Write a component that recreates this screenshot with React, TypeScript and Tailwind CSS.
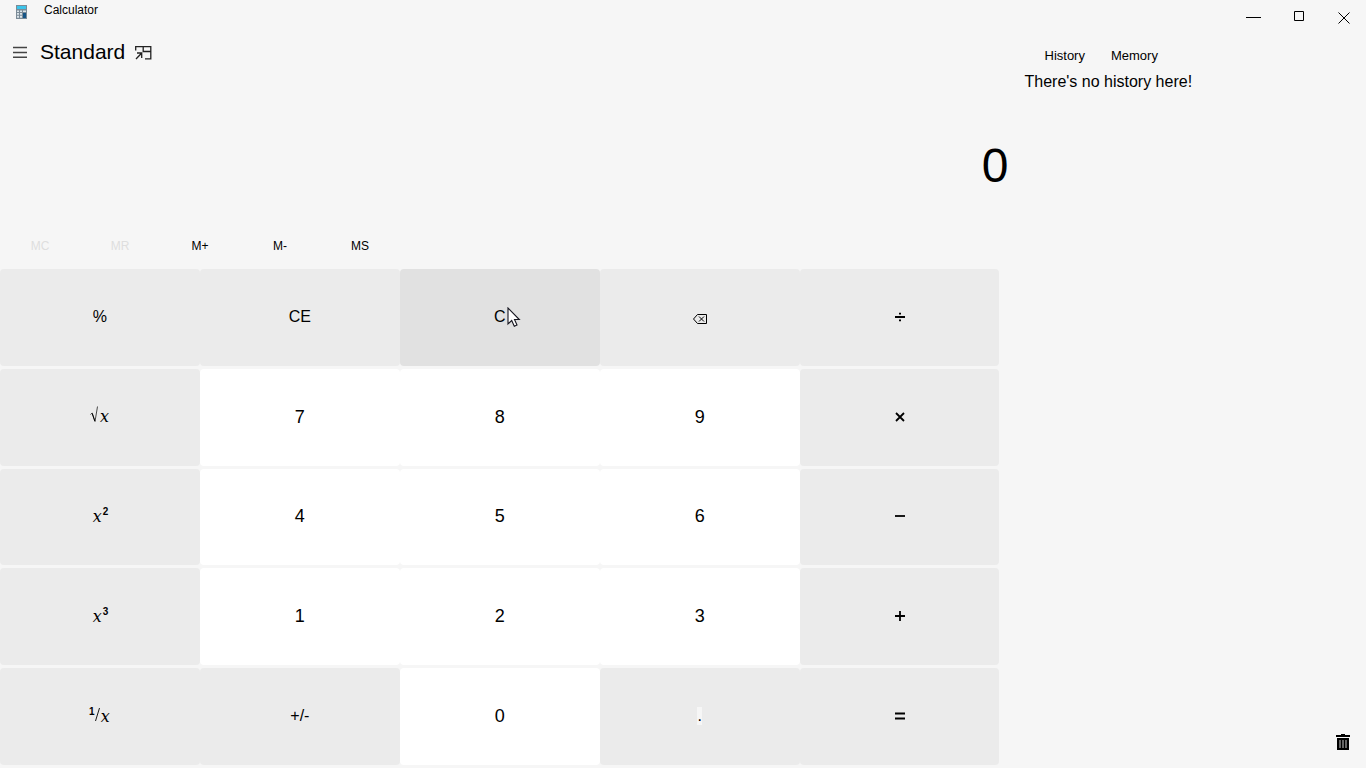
import type { ReactNode } from "react";

type Key = { label: string; face: ReactNode; tone: string };

const OPERATOR = "bg-[#ebebeb] hover:bg-[#e1e1e1]";
const ACTIVE = "bg-[#e1e1e1]";
const DIGIT = "bg-white text-lg hover:bg-[#e1e1e1]";

const Backspace = () => (
  <svg width="16" height="12" viewBox="0 0 16 12" fill="none" stroke="currentColor" className="mt-1">
    <path d="M5.5 1.5H14.5V10.5H5.5L1.5 6Z" />
    <path d="M7 3.5L12 8.5M12 3.5L7 8.5" />
  </svg>
);

const Operator = ({ d }: { d: string }) => (
  <svg width="12" height="12" viewBox="0 0 12 12" fill="none" stroke="currentColor" strokeWidth="1.8">
    <path d={d} />
  </svg>
);

const X = () => <span className="pt-px font-['DejaVu_Math_TeX_Gyre','Liberation_Serif',serif] text-base leading-5">𝑥</span>;

const Power = ({ n }: { n: string }) => (
  <span className="flex items-start leading-5">
    <X />
    <b className="text-[10px] leading-3">{n}</b>
  </span>
);

const Root = () => (
  <span className="flex items-start leading-5">
    <svg width="9" height="18" viewBox="0 0 9 18" fill="none" stroke="currentColor" strokeWidth="0.7">
      <path d="M0.5 8.5L2.2 7L5 15.5L7.5 0.5" />
      <path d="M2.2 7.5L4.8 15" strokeWidth="1" />
    </svg>
    <X />
  </span>
);

const Reciprocal = () => (
  <span className="flex items-start leading-5">
    <b className="text-[10px] leading-3">1</b>
    <svg width="5" height="16" viewBox="0 0 5 16" fill="none" stroke="currentColor" strokeWidth="0.9">
      <path d="M0.5 15L4.5 2" />
    </svg>
    <X />
  </span>
);

const digit = (n: string): Key => ({ label: n, face: n, tone: DIGIT });
const op = (label: string, face: ReactNode): Key => ({ label, face, tone: OPERATOR });

const keys: Key[] = [
  op("Percent", "%"),
  op("Clear entry", "CE"),
  { label: "Clear", face: "C", tone: ACTIVE },
  op("Backspace", <Backspace />),
  op("Divide", <Operator d="M1 6H11M5 2.6H7M5 9.4H7" />),
  op("Square root", <Root />),
  digit("7"),
  digit("8"),
  digit("9"),
  op("Multiply", <Operator d="M2 2L10 10M10 2L2 10" />),
  op("Square", <Power n="2" />),
  digit("4"),
  digit("5"),
  digit("6"),
  op("Subtract", <Operator d="M1 6H11" />),
  op("Cube", <Power n="3" />),
  digit("1"),
  digit("2"),
  digit("3"),
  op("Add", <Operator d="M1 6H11M6 1V11" />),
  op("Reciprocal", <Reciprocal />),
  op("Negate", "+/-"),
  digit("0"),
  op("Decimal point", <span className="bg-[#f6f6f6] leading-[18px]">.</span>),
  op("Equals", <Operator d="M1 3.5H11M1 8.5H11" />),
];

const memoryKeys = [
  { name: "MC", disabled: true },
  { name: "MR", disabled: true },
  { name: "M+", disabled: false },
  { name: "M-", disabled: false },
  { name: "MS", disabled: false },
];

const Logo = () => (
  <svg width="11" height="14" viewBox="0 0 11 14">
    <path d="M0 0H11V14H0Z" fill="#7b8b97" />
    <path d="M1 1H10V4H1Z" fill="#3cc4ea" />
    <path d="M1 5.5H3V7H1ZM4 5.5H6V7H4ZM7 5.5H10V7H7ZM1 8H3V9.7H1ZM4 8H6V9.7H4ZM1 10.7H3V12.7H1ZM4 10.7H6V12.7H4Z" fill="#dce5ea" />
    <path d="M7 8H10V13H7Z" fill="#165586" />
  </svg>
);

const Pointer = () => (
  <svg width="14" height="21" viewBox="0 0 14 21" className="pointer-events-none absolute left-[52%] ml-[3px] mt-0.5">
    <path d="M1 1V17L4.7 13.5L7.3 19.2L10 18L7.5 12.5H12.3Z" fill="white" stroke="#15151f" strokeWidth="1.1" />
  </svg>
);

export default function App() {
  return (
    <div className="flex min-h-screen flex-col bg-[#f6f6f6] font-['Liberation_Sans',Arial,sans-serif] text-black">
      <header className="flex h-9 items-start justify-between">
        <div className="flex items-start gap-[17px] pl-4">
          <span className="pt-[5px]"><Logo /></span>
          <span className="pt-0.5 text-xs">Calculator</span>
        </div>
        <div className="flex">
          <button aria-label="Minimize" className="flex h-9 w-[45px] items-center justify-center">
            <svg width="15" height="12" viewBox="0 0 15 12" stroke="currentColor"><path d="M0 5.5H15" /></svg>
          </button>
          <button aria-label="Maximize" className="flex h-8 w-[45px] items-center justify-center">
            <svg width="10" height="10" viewBox="0 0 10 10" fill="none" stroke="currentColor"><path d="M0.5 0.5H9.5V9.5H0.5Z" /></svg>
          </button>
          <button aria-label="Close" className="flex h-9 w-[45px] items-center justify-center">
            <svg width="12" height="12" viewBox="0 0 12 12" stroke="currentColor"><path d="M0.5 0.5L11.5 11.5M11.5 0.5L0.5 11.5" /></svg>
          </button>
        </div>
      </header>

      <div className="flex grow">
        <main className="flex w-3/4 flex-col">
          <div className="flex h-8 items-center pl-3">
            <button aria-label="Open navigation" className="mr-3 p-px">
              <svg width="14" height="12" viewBox="0 0 14 12" stroke="#444" strokeWidth="1.5"><path d="M0 1.5H14M0 6.5H14M0 11.3H14" /></svg>
            </button>
            <h1 className="text-[21px]">Standard</h1>
            <button aria-label="Keep on top" className="ml-[10px] mt-0.5">
              <svg width="17" height="14" viewBox="0 0 17 14" fill="none" stroke="#222" strokeWidth="1.3">
                <path d="M0.7 4.5V0.7H15.8V12.8H10M8.2 0.7V5.5H15.8M1 13L6.5 7.2M2 7H6.7V12" />
              </svg>
            </button>
          </div>
          <output className="flex h-[164px] items-center justify-end pr-4 pt-8 text-5xl">0</output>
          <div className="flex h-[37px] items-start pt-0.5">
            {memoryKeys.map(({ name, disabled }) => (
              <button key={name} disabled={disabled} className="w-20 py-1 text-xs leading-4 disabled:text-[#dedede]">{name}</button>
            ))}
          </div>
          <div className="grid grow auto-rows-fr grid-cols-5 gap-y-[3px] pb-[3px] pr-[25px]">
            {keys.map(({ label, face, tone }) => (
              <button key={label} aria-label={label} className={`relative flex items-center justify-center rounded-[4px] pb-px ${tone}`}>
                {face}
                {label === "Clear" && <Pointer />}
              </button>
            ))}
          </div>
        </main>

        <aside className="flex grow flex-col justify-between">
          <div>
            <div className="flex gap-[26px] pl-5 pt-2.5 text-[13px] leading-5">
              <button>History</button>
              <button>Memory</button>
            </div>
            <p className="pt-1 leading-6">There's no history here!</p>
          </div>
          <button aria-label="Clear history" className="self-end px-4 pb-[17px]">
            <svg width="14" height="18" viewBox="0 0 14 18">
              <path d="M5 1H9V2H14V4H0V2H5ZM1 5H13V17H1Z" fill="currentColor" />
              <path d="M4 7V15M7 7V15M10 7V15" stroke="#a9a9a9" strokeWidth="1.2" />
            </svg>
          </button>
        </aside>
      </div>
    </div>
  );
}
